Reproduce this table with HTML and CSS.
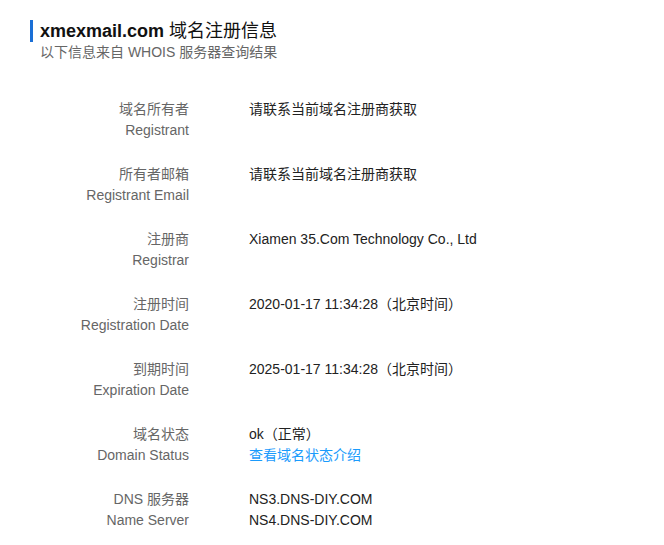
FILE: index.html
```html
<!DOCTYPE html>
<html lang="zh">
<head>
    <meta charset="UTF-8">
    <meta name="viewport" content="width=device-width, initial-scale=1.0">
    <title>xmexmail.com 域名注册信息</title>
    <link rel="stylesheet" href="styles.css">
</head>
<body>
    <div class="header">
        <h1 class="title"><b>xmexmail.com</b> 域名注册信息</h1>
        <p class="subtitle">以下信息来自 WHOIS 服务器查询结果</p>
    </div>

    <ul class="info-list">
        <li class="info-row">
            <div class="info-label">域名所有者<br>Registrant</div>
            <div class="info-value">请联系当前域名注册商获取</div>
        </li>
        <li class="info-row">
            <div class="info-label">所有者邮箱<br>Registrant Email</div>
            <div class="info-value">请联系当前域名注册商获取</div>
        </li>
        <li class="info-row">
            <div class="info-label">注册商<br>Registrar</div>
            <div class="info-value">Xiamen 35.Com Technology Co., Ltd</div>
        </li>
        <li class="info-row">
            <div class="info-label">注册时间<br>Registration Date</div>
            <div class="info-value">2020-01-17 11:34:28（北京时间）</div>
        </li>
        <li class="info-row">
            <div class="info-label">到期时间<br>Expiration Date</div>
            <div class="info-value">2025-01-17 11:34:28（北京时间）</div>
        </li>
        <li class="info-row">
            <div class="info-label">域名状态<br>Domain Status</div>
            <div class="info-value">ok（正常）<br><a class="info-link" href="#">查看域名状态介绍</a></div>
        </li>
        <li class="info-row">
            <div class="info-label">DNS 服务器<br>Name Server</div>
            <div class="info-value">NS3.DNS-DIY.COM<br>NS4.DNS-DIY.COM</div>
        </li>
    </ul>
</body>
</html>
```

FILE: styles.css
```css
:root {
    --blue-bar: #1a6fd6;
    --label-color: #666;
    --value-color: #222;
    --link-color: #1a9bfc;
}

body {
    margin: 0;
    font-family: 'Liberation Sans', Arial, 'Noto Sans CJK SC', sans-serif;
    font-size: 14px;
    color: var(--value-color);
    background: #fff;
}

.header {
    padding: 20px 0 0 30px;
}

.title {
    margin: 0;
    padding-left: 7px;
    border-left: 3px solid var(--blue-bar);
    font-size: 18px;
    font-weight: normal;
    line-height: 22px;
    color: #111;
}

.title b {
    font-weight: bold;
}

.subtitle {
    margin: 0;
    padding-left: 10px;
    font-size: 14px;
    line-height: 20px;
    color: var(--label-color);
}

.info-list {
    list-style: none;
    margin: 37px 0 0;
    padding: 0;
}

.info-row {
    display: flex;
    gap: 60px;
    line-height: 21px;
    margin-bottom: 23px;
}

.info-label {
    width: 149px;
    padding-left: 40px;
    text-align: right;
    color: var(--label-color);
}

.info-link {
    color: var(--link-color);
    text-decoration: none;
}
```
